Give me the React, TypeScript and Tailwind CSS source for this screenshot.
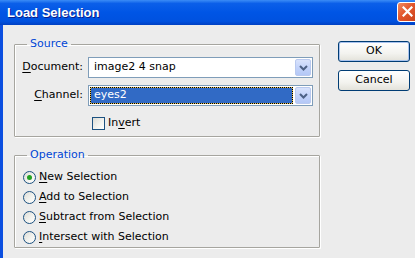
import React from "react";

const ui = { fontFamily: '"DejaVu Sans", Verdana, sans-serif' };

function Chevron() {
  return (
    <svg width="9" height="6" viewBox="0 0 9 6">
      <path d="M1 1 L4.5 4.5 L8 1" fill="none" stroke="#4d6185" strokeWidth="2" />
    </svg>
  );
}

function DropBtn() {
  return (
    <div className="w-[16px] my-px mr-px flex items-center justify-center rounded-[2px] border border-[#b9c9ef] bg-[linear-gradient(180deg,#d9e3fc_0%,#c3d3fa_50%,#b4c8f6_100%)]">
      <Chevron />
    </div>
  );
}

function Radio({ checked }: { checked?: boolean }) {
  return (
    <div className="w-[13px] h-[13px] rounded-full border border-[#1c5180] bg-[linear-gradient(135deg,#dcdcd6_0%,#f4f4f0_60%,#ffffff_100%)] flex items-center justify-center shrink-0">
      {checked && <div className="w-[5px] h-[5px] rounded-full bg-[#21a121]" />}
    </div>
  );
}

function U({ children }: { children: React.ReactNode }) {
  return <span className="underline underline-offset-[2px]">{children}</span>;
}

export default function App() {
  return (
    <div className="w-[415px] h-[258px] overflow-hidden bg-[#ececec] flex flex-col text-[11px] text-black" style={ui}>
      {/* Title bar */}
      <div className="h-[25px] shrink-0 flex items-center justify-between overflow-hidden bg-[linear-gradient(180deg,#3b8cf6_0%,#0b5fe9_14%,#0055e5_50%,#0051df_85%,#0040c2_100%)]">
        <div
          className="pl-[7px] text-white text-[13px] font-bold [text-shadow:1px_1px_0_#0a1e8c]"
          style={{ fontFamily: '"Liberation Sans", Arial, sans-serif' }}
        >
          Load Selection
        </div>
        <div className="w-[21px] h-[20px] mr-[-3px] mt-[-2px] rounded-[3px] border border-white bg-[linear-gradient(135deg,#f08a62_0%,#e2562c_45%,#c9421c_100%)] flex items-center justify-center">
          <svg width="11" height="11" viewBox="0 0 11 11">
            <path d="M1.5 1.5 L9.5 9.5 M9.5 1.5 L1.5 9.5" stroke="#fff" strokeWidth="2.2" strokeLinecap="square" />
          </svg>
        </div>
      </div>

      {/* Body */}
      <div className="flex-1 flex border-l-[3px] border-[#0b4fe0] pl-[11px] pt-[12px]">
        <div className="w-[306px] flex flex-col gap-[11px]">
          {/* Source */}
          <fieldset className="h-[100px] border border-[#a6a59f] rounded-[1px] shadow-[inset_1px_1px_0_#fff,1px_1px_0_#fff]">
            <legend className="ml-[12px] px-[3px] leading-[14px] text-[#0046d5]">Source</legend>
            <div className="pt-[6px] flex flex-col">
              <div className="flex items-center h-[21px]">
                <div className="w-[68px] text-right">
                  <U>D</U>ocument:
                </div>
                <div className="ml-[5px] w-[225px] h-[21px] flex border border-[#7f9db9] bg-white">
                  <div className="flex-1 pl-[5px] flex items-center">image2 4 snap</div>
                  <DropBtn />
                </div>
              </div>
              <div className="flex items-center h-[21px] mt-[7px]">
                <div className="w-[68px] text-right">
                  <U>C</U>hannel:
                </div>
                <div className="ml-[5px] w-[225px] h-[21px] flex border border-[#7f9db9] bg-white">
                  <div className="flex-1 m-px mr-[2px] bg-[#e8c050]">
                    <div className="h-full border border-dotted border-black bg-clip-padding bg-[#316ac5] text-white pl-[3px] flex items-center">
                      eyes2
                    </div>
                  </div>
                  <DropBtn />
                </div>
              </div>
              <div className="flex items-center mt-[9px] pl-[77px]">
                <div className="w-[13px] h-[13px] border border-[#1c5180] bg-[linear-gradient(135deg,#dcdcd6_0%,#f4f4f0_60%,#ffffff_100%)]" />
                <div className="ml-[3px]">
                  In<U>v</U>ert
                </div>
              </div>
            </div>
          </fieldset>

          {/* Operation */}
          <fieldset className="h-[100px] border border-[#a6a59f] rounded-[1px] shadow-[inset_1px_1px_0_#fff,1px_1px_0_#fff]">
            <legend className="ml-[12px] px-[3px] leading-[14px] text-[#0046d5]">Operation</legend>
            <div className="pt-[5px] pl-[8px] flex flex-col">
              {[
                ["N", "ew Selection", true],
                ["A", "dd to Selection", false],
                ["S", "ubtract from Selection", false],
                ["I", "ntersect with Selection", false],
              ].map(([k, rest, c]) => (
                <div key={k as string} className="h-[20px] flex items-center">
                  <Radio checked={c as boolean} />
                  <div className="ml-[3px]">
                    <U>{k as string}</U>
                    {rest as string}
                  </div>
                </div>
              ))}
            </div>
          </fieldset>
        </div>

        {/* Buttons */}
        <div className="ml-[18px] pt-[4px] flex flex-col gap-[8px]">
          <button className="w-[72px] h-[21px] rounded-[3px] border border-[#003c74] bg-[linear-gradient(180deg,#ffffff_0%,#f3f3ef_60%,#e3e2da_100%)] shadow-[inset_0_0_0_1px_#a9c3ee] flex items-center justify-center">
            OK
          </button>
          <button className="w-[72px] h-[21px] rounded-[3px] border border-[#003c74] bg-[linear-gradient(180deg,#ffffff_0%,#f3f3ef_60%,#e3e2da_100%)] flex items-center justify-center">
            Cancel
          </button>
        </div>
      </div>
    </div>
  );
}
